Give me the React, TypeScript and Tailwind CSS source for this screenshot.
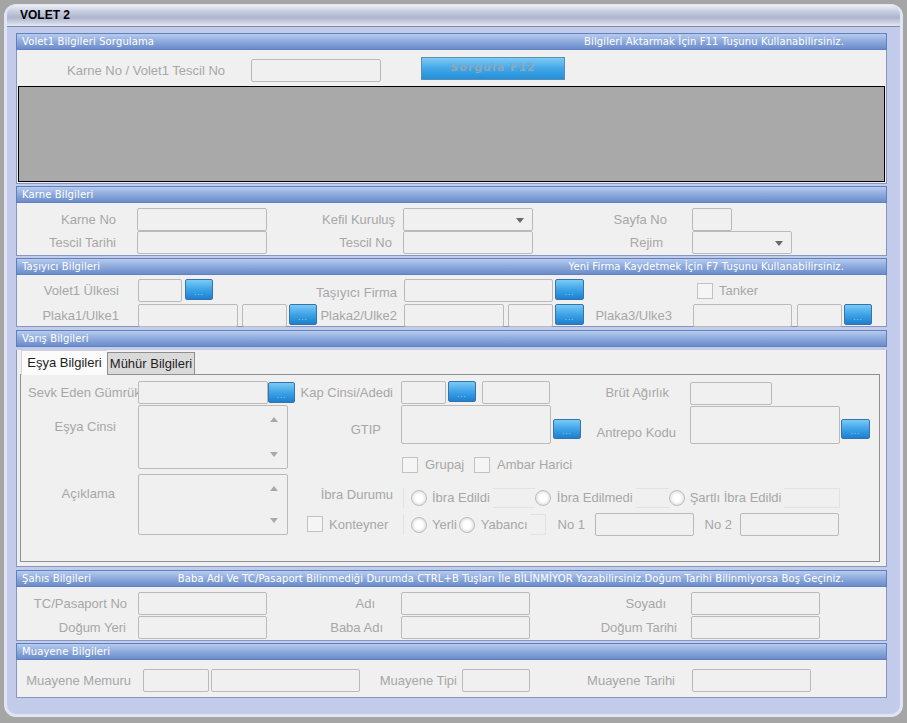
import React from "react";

const Lb = ({ c = "", children }: { c?: string; children: React.ReactNode }) => (
  <div className={`shrink-0 h-[23px] leading-[23px] whitespace-nowrap text-right text-[13px] text-[#a7a7a7] ${c}`}>{children}</div>
);

const Inp = ({ c = "" }: { c?: string }) => (
  <div className={`shrink-0 h-[23px] rounded-[2px] border border-[#bababa] bg-[#f0f0f0] ${c}`} />
);

const Sel = ({ c = "" }: { c?: string }) => (
  <div className={`relative shrink-0 h-[23px] rounded-[2px] border border-[#bababa] bg-[#f0f0f0] ${c}`}>
    <span className="absolute right-[8px] top-[9px] h-0 w-0 border-x-[4px] border-t-[5px] border-x-transparent border-t-[#6a6a6a]" />
  </div>
);

const Dots = ({ c = "" }: { c?: string }) => (
  <div className={`shrink-0 flex items-end justify-center pb-[4px] rounded-[2px] border border-[#3673ad] bg-[linear-gradient(to_bottom,#7bcaf5,#3ea3e7_50%,#1c80cf)] ${c}`}>
    <span className="text-[8px] leading-[4px] tracking-[1px] text-[#b6dbf5]">...</span>
  </div>
);

const Cb = ({ c = "" }: { c?: string }) => (
  <span className={`block shrink-0 w-[16px] h-[16px] border border-[#c2c2c2] bg-[#f5f5f5] ${c}`} />
);

const Rd = ({ c = "" }: { c?: string }) => (
  <span className={`block shrink-0 w-[16px] h-[16px] rounded-full border border-[#bdbdbd] bg-[radial-gradient(circle,#ffffff_35%,#e2e2e2_75%)] ${c}`} />
);

const TA = ({ c = "", arrows = false }: { c?: string; arrows?: boolean }) => (
  <div className={`relative shrink-0 rounded-[2px] border border-[#bababa] bg-[#f0f0f0] ${c}`}>
    {arrows && (
      <>
        <span className="absolute right-[9px] top-[11px] h-0 w-0 border-x-[4px] border-b-[5px] border-x-transparent border-b-[#a9a9a9]" />
        <span className="absolute right-[9px] bottom-[11px] h-0 w-0 border-x-[4px] border-t-[5px] border-x-transparent border-t-[#a9a9a9]" />
      </>
    )}
  </div>
);

const Section = ({
  title,
  right,
  body,
  children,
}: {
  title: string;
  right?: string;
  body: string;
  children: React.ReactNode;
}) => (
  <div className="w-[871px]">
    <div className="h-[17px] flex items-center justify-between pl-[5px] pr-[42px] border border-[#5f80bf] bg-[linear-gradient(to_bottom,#b6cbee,#8eaadc_50%,#6b8bca)] text-white text-[10px] leading-none tracking-[0.12px] font-['DejaVu_Sans',sans-serif] whitespace-nowrap">
      <span>{title}</span>
      {right && <span>{right}</span>}
    </div>
    <div className={`border-x border-b border-[#8796be] bg-[#f0f0f0] ${body}`}>{children}</div>
  </div>
);

export default function App() {
  return (
    <div className="w-[907px] h-[723px] bg-[#a5a5a5] pt-[4px] pl-[4px] overflow-hidden font-['Liberation_Sans',Arial,sans-serif]">
      <div className="w-[899px] h-[713px] rounded-[12px] overflow-hidden border-x-[3px] border-b-[3px] border-t border-[#dfe5f4] bg-[#c2cbe9]">
        {/* Title bar */}
        <div className="h-[22px] flex items-center pl-[13px] pb-[1px] border-b border-[#7e8bab] bg-[linear-gradient(to_bottom,#eef1f8_0%,#c8cde1_30%,#adb4cd_60%,#e4e7f2_100%)] text-[12px] font-bold text-black">
          VOLET 2
        </div>

        <div className="ml-[9px]">
          {/* Section 1 */}
          <div className="mt-[6px]">
            <Section
              title="Volet1 Bilgileri Sorgulama"
              right="Bilgileri Aktarmak İçin F11 Tuşunu Kullanabilirsiniz."
              body="h-[134px]"
            >
              <div className="flex items-start pt-[7px]">
                <Lb c="w-[208px] mt-[2px]">Karne No / Volet1 Tescil No</Lb>
                <Inp c="ml-[26px] w-[130px] mt-[2px]" />
                <div className="ml-[40px] w-[144px] h-[23px] flex items-center justify-center border border-[#5e8db3] bg-[linear-gradient(to_bottom,#7ccbf4,#43a7e8_50%,#2190da)] font-['DejaVu_Sans',sans-serif] text-[11px] font-bold tracking-[1px] text-[#8ca6ba]">
                  Sorgula F12
                </div>
              </div>
              <div className="mt-[4px] ml-[1px] w-[867px] h-[96px] border border-black bg-[#a9a9a9]" />
            </Section>
          </div>

          {/* Section 2 */}
          <div className="mt-[2px]">
            <Section title="Karne Bilgileri" body="h-[53px]">
              <div className="flex pt-[5px]">
                <Lb c="w-[99px]">Karne No</Lb>
                <Inp c="ml-[21px] w-[130px]" />
                <Lb c="w-[128px]">Kefil Kuruluş</Lb>
                <Sel c="ml-[8px] w-[130px]" />
                <Lb c="w-[134px]">Sayfa No</Lb>
                <Inp c="ml-[25px] w-[40px]" />
              </div>
              <div className="flex">
                <Lb c="w-[99px]">Tescil Tarihi</Lb>
                <Inp c="ml-[21px] w-[130px]" />
                <Lb c="w-[125px]">Tescil No</Lb>
                <Inp c="ml-[11px] w-[130px]" />
                <Lb c="w-[130px]">Rejim</Lb>
                <Sel c="ml-[29px] w-[100px]" />
              </div>
            </Section>
          </div>

          {/* Section 3 */}
          <div className="mt-[2px]">
            <Section
              title="Taşıyıcı Bilgileri"
              right="Yeni Firma Kaydetmek İçin F7 Tuşunu Kullanabilirsiniz."
              body="h-[52px]"
            >
              <div className="flex items-start pt-[4px]">
                <Lb c="w-[102px]">Volet1 Ülkesi</Lb>
                <Inp c="ml-[19px] w-[44px]" />
                <Dots c="ml-[3px] w-[28px] h-[21px]" />
                <Lb c="w-[184px] mt-[2px]">Taşıyıcı Firma</Lb>
                <Inp c="ml-[7px] w-[149px]" />
                <Dots c="ml-[2px] w-[29px] h-[21px]" />
                <div className="ml-[113px] mt-[2px] flex items-center">
                  <Cb c="w-[15px] h-[15px]" />
                  <span className="ml-[6px] text-[13px] text-[#a7a7a7]">Tanker</span>
                </div>
              </div>
              <div className="flex items-start">
                <Lb c="w-[102px]">Plaka1/Ulke1</Lb>
                <Inp c="ml-[19px] w-[100px]" />
                <Inp c="ml-[4px] w-[45px]" />
                <Dots c="ml-[2px] w-[28px] h-[21px]" />
                <Lb c="w-[80px]">Plaka2/Ulke2</Lb>
                <Inp c="ml-[7px] w-[100px]" />
                <Inp c="ml-[4px] w-[45px]" />
                <Dots c="ml-[2px] w-[29px] h-[21px]" />
                <Lb c="w-[88px]">Plaka3/Ulke3</Lb>
                <Inp c="ml-[21px] w-[99px]" />
                <Inp c="ml-[5px] w-[45px]" />
                <Dots c="ml-[2px] w-[28px] h-[21px]" />
              </div>
            </Section>
          </div>

          {/* Section 4 */}
          <div className="mt-[3px]">
            <Section title="Varış Bilgileri" body="h-[217px]">
              <div className="relative z-10 flex items-start h-[24px] mt-[3px] ml-[4px]">
                <div className="w-[86px] h-[25px] flex items-center justify-center border-l border-t border-[#d4d4d4] bg-[#fbfbfb] text-[13px] text-[#1e1e1e]">
                  Eşya Bilgileri
                </div>
                <div className="mt-[2px] w-[88px] h-[22px] flex items-center justify-center border border-b-0 border-[#8e8e8e] bg-[#dadada] text-[13px] text-[#1e1e1e]">
                  Mühür Bilgileri
                </div>
              </div>
              <div className="ml-[3px] w-[860px] h-[188px] border border-[#8f8f8f]">
                {/* Row A */}
                <div className="flex items-start mt-[6px]">
                  <div className="ml-[7px] w-[110px] shrink-0 overflow-hidden h-[23px] leading-[23px] whitespace-nowrap text-[13px] text-[#a7a7a7]">
                    Sevk Eden Gümrük
                  </div>
                  <Inp c="w-[130px]" />
                  <Dots c="w-[27px] h-[21px] mt-[1px]" />
                  <Lb c="w-[98px]">Kap Cinsi/Adedi</Lb>
                  <Inp c="ml-[8px] w-[45px]" />
                  <Dots c="ml-[2px] w-[28px] h-[21px]" />
                  <Inp c="ml-[6px] w-[68px]" />
                  <Lb c="w-[119px]">Brüt Ağırlık</Lb>
                  <Inp c="ml-[21px] w-[82px] mt-[1px]" />
                </div>
                {/* Lower area */}
                <div className="flex items-start">
                  <div className="w-[267px] shrink-0">
                    <div className="flex items-start">
                      <Lb c="w-[95px] mt-[10px]">Eşya Cinsi</Lb>
                      <TA c="ml-[22px] w-[150px] h-[64px]" arrows />
                    </div>
                    <div className="flex items-start mt-[5px]">
                      <Lb c="w-[94px] mt-[8px]">Açıklama</Lb>
                      <TA c="ml-[23px] w-[150px] h-[61px]" arrows />
                    </div>
                  </div>
                  <div className="flex flex-col">
                    <div className="flex items-start">
                      <Lb c="w-[93px] mt-[13px]">GTIP</Lb>
                      <TA c="ml-[20px] w-[150px] h-[39px]" />
                      <Dots c="ml-[2px] w-[28px] h-[20px] mt-[14px]" />
                      <Lb c="w-[95px] mt-[16px]">Antrepo Kodu</Lb>
                      <TA c="ml-[14px] w-[150px] h-[38px] mt-[1px]" />
                      <Dots c="ml-[1px] w-[29px] h-[20px] mt-[14px]" />
                    </div>
                    <div className="flex items-center mt-[12px] h-[17px]">
                      <Cb c="ml-[114px]" />
                      <span className="ml-[7px] w-[41px] shrink-0 text-[13px] text-[#a7a7a7] whitespace-nowrap">Grupaj</span>
                      <Cb c="ml-[8px]" />
                      <span className="ml-[7px] text-[13px] text-[#a7a7a7] whitespace-nowrap">Ambar Harici</span>
                    </div>
                    <div className="flex items-start mt-[15px] h-[20px]">
                      <div className="shrink-0 w-[105px] h-[20px] leading-[14px] text-right text-[13px] text-[#a7a7a7] whitespace-nowrap">
                        İbra Durumu
                      </div>
                      <div className="ml-[10px] w-[437px] h-[20px] border border-[#e2e2e2] flex items-center">
                        <div className="flex items-center h-[22px] bg-[#f0f0f0] pl-[7px] pr-[3px]">
                          <Rd />
                          <span className="ml-[5px] text-[13px] text-[#a7a7a7] whitespace-nowrap">İbra Edildi</span>
                        </div>
                        <div className="flex items-center h-[22px] bg-[#f0f0f0] ml-[42px] pr-[3px]">
                          <Rd />
                          <span className="ml-[6px] text-[13px] text-[#a7a7a7] whitespace-nowrap">İbra Edilmedi</span>
                        </div>
                        <div className="flex items-center h-[22px] bg-[#f0f0f0] ml-[33px] pr-[3px]">
                          <Rd />
                          <span className="ml-[5px] text-[13px] text-[#a7a7a7] whitespace-nowrap">Şartlı İbra Edildi</span>
                        </div>
                      </div>
                    </div>
                    <div className="flex items-start mt-[5px]">
                      <Cb c="ml-[19px] mt-[3px]" />
                      <span className="ml-[6px] w-[64px] shrink-0 h-[23px] leading-[23px] text-[13px] text-[#a7a7a7] whitespace-nowrap">Konteyner</span>
                      <div className="ml-[10px] mt-[1px] w-[143px] h-[21px] shrink-0 border border-[#e2e2e2] flex items-center">
                        <div className="flex items-center h-[23px] bg-[#f0f0f0] pl-[7px]">
                          <Rd />
                          <span className="ml-[5px] text-[13px] text-[#a7a7a7] whitespace-nowrap">Yerli</span>
                        </div>
                        <div className="flex items-center h-[23px] bg-[#f0f0f0] pl-[2px] pr-[2px]">
                          <Rd />
                          <span className="ml-[6px] text-[13px] text-[#a7a7a7] whitespace-nowrap">Yabancı</span>
                        </div>
                      </div>
                      <Lb c="ml-[10px] w-[29px] text-left">No 1</Lb>
                      <Inp c="ml-[10px] w-[99px]" />
                      <Lb c="ml-[9px] w-[29px] text-left">No 2</Lb>
                      <Inp c="ml-[8px] w-[99px]" />
                    </div>
                  </div>
                </div>
              </div>
            </Section>
          </div>

          {/* Section 5 */}
          <div className="mt-[3px]">
            <Section
              title="Şahıs Bilgileri"
              right="Baba Adı Ve TC/Pasaport Bilinmediği Durumda CTRL+B Tuşları İle BİLİNMİYOR Yazabilirsiniz.Doğum Tarihi Bilinmiyorsa Boş Geçiniz."
              body="h-[54px]"
            >
              <div className="flex pt-[5px]">
                <Lb c="w-[110px]">TC/Pasaport No</Lb>
                <Inp c="ml-[11px] w-[129px]" />
                <Lb c="w-[108px]">Adı</Lb>
                <Inp c="ml-[26px] w-[129px]" />
                <Lb c="w-[136px]">Soyadı</Lb>
                <Inp c="ml-[25px] w-[129px]" />
              </div>
              <div className="flex mt-[1px]">
                <Lb c="w-[109px]">Doğum Yeri</Lb>
                <Inp c="ml-[12px] w-[129px]" />
                <Lb c="w-[116px]">Baba Adı</Lb>
                <Inp c="ml-[18px] w-[129px]" />
                <Lb c="w-[147px]">Doğum Tarihi</Lb>
                <Inp c="ml-[14px] w-[129px]" />
              </div>
            </Section>
          </div>

          {/* Section 6 */}
          <div className="mt-[2px]">
            <Section title="Muayene Bilgileri" body="h-[38px]">
              <div className="flex pt-[9px]">
                <Lb c="w-[114px]">Muayene Memuru</Lb>
                <Inp c="ml-[12px] w-[66px]" />
                <Inp c="ml-[2px] w-[149px]" />
                <Lb c="w-[97px]">Muayene Tipi</Lb>
                <Inp c="ml-[5px] w-[68px]" />
                <Lb c="w-[145px]">Muayene Tarihi</Lb>
                <Inp c="ml-[17px] w-[119px]" />
              </div>
            </Section>
          </div>
        </div>
      </div>
    </div>
  );
}
